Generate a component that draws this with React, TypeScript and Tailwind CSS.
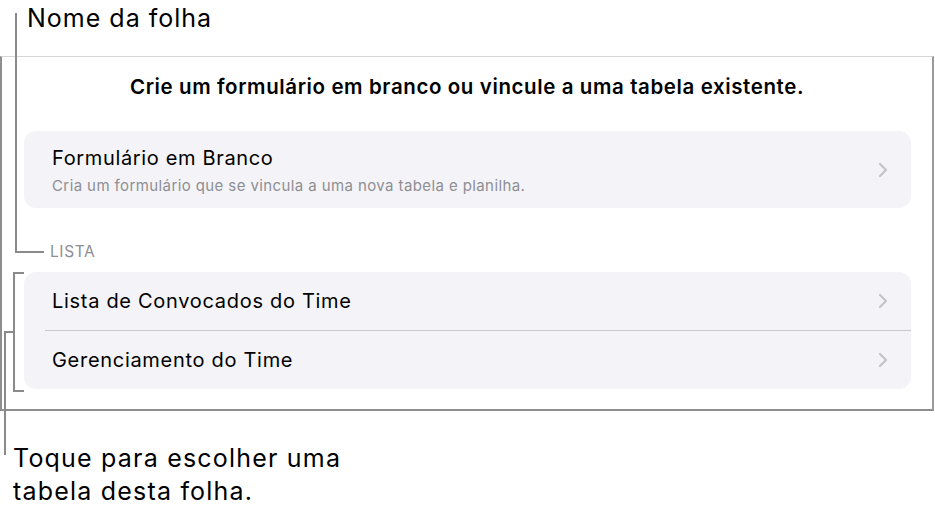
import React from "react";

const Chevron = () => (
  <svg width="10" height="16" viewBox="0 0 10 16" fill="none" className="shrink-0">
    <path d="M2 2l6 6-6 6" stroke="#c4c4c7" strokeWidth="2.2" strokeLinecap="round" strokeLinejoin="round" />
  </svg>
);

export default function App() {
  return (
    <div
      className="relative w-[935px] h-[513px] bg-white overflow-hidden text-black"
      style={{ fontFamily: "Inter, 'Noto Sans', sans-serif" }}
    >
      {/* Top callout */}
      <div className="h-[56px] pl-[27px] pt-[3px] text-[25px] leading-[30px] tracking-[1px]">Nome da folha</div>

      {/* Panel */}
      <div className="w-[934px] h-[355px] border-t border-t-[#d6d6d6] border-l-2 border-l-[#8e8e8e] border-r-2 border-r-[#9a9a9a] border-b-2 border-b-[#8e8e8e] flex flex-col">
        <div className="pt-[17px] text-center text-[20.5px] leading-[26px] font-semibold tracking-[0.6px]">
          Crie um formulário em branco ou vincule a uma tabela existente.
        </div>
        <div className="mt-[31px] ml-[22px] mr-[21px] h-[77px] rounded-[12px] bg-[#f4f4f8] flex items-center pl-[28px] pr-[23px]">
          <div className="flex-1 flex flex-col">
            <div className="text-[20px] leading-[26px] tracking-[0.65px]">Formulário em Branco</div>
            <div className="text-[15px] leading-[18px] text-[#8e8e93] mt-[6px] tracking-[0.4px]">
              Cria um formulário que se vincula a uma nova tabela e planilha.
            </div>
          </div>
          <Chevron />
        </div>
        <div className="mt-[35px] pl-[48px] text-[15.5px] leading-[18px] text-[#8e8e93] tracking-[0.6px]">LISTA</div>
        <div className="mt-[11px] ml-[22px] mr-[21px] h-[117px] rounded-[12px] bg-[#f4f4f8] flex flex-col">
          <div className="h-[58px] flex items-center pl-[28px] pr-[23px]">
            <div className="flex-1 text-[20px] leading-[26px] tracking-[0.7px]">Lista de Convocados do Time</div>
            <Chevron />
          </div>
          <div className="ml-[21px] h-px bg-[#c8c8cc]" />
          <div className="h-[58px] flex items-center pl-[28px] pr-[23px]">
            <div className="flex-1 text-[20px] leading-[26px] tracking-[0.7px]">Gerenciamento do Time</div>
            <Chevron />
          </div>
        </div>
      </div>

      {/* Bottom callout */}
      <div className="pl-[13px] pt-[31px] text-[25px] leading-[33px] tracking-[1.2px]">
        Toque para escolher uma
        <br />
        tabela desta folha.
      </div>

      {/* Leader lines (annotation overlay) */}
      <div className="absolute left-[15px] top-[13px] w-[2px] h-[240px] bg-[#8a8a8a]" />
      <div className="absolute left-[15px] top-[251px] w-[29px] h-[2px] bg-[#8a8a8a]" />

      <div className="absolute left-[13px] top-[272px] w-[2px] h-[120px] bg-[#8a8a8a]" />
      <div className="absolute left-[13px] top-[272px] w-[11px] h-[2px] bg-[#8a8a8a]" />
      <div className="absolute left-[13px] top-[390px] w-[11px] h-[2px] bg-[#8a8a8a]" />

      <div className="absolute left-[4px] top-[331px] w-[10px] h-[2px] bg-[#8a8a8a]" />
      <div className="absolute left-[4px] top-[331px] w-[2px] h-[124px] bg-[#8a8a8a]" />
    </div>
  );
}
